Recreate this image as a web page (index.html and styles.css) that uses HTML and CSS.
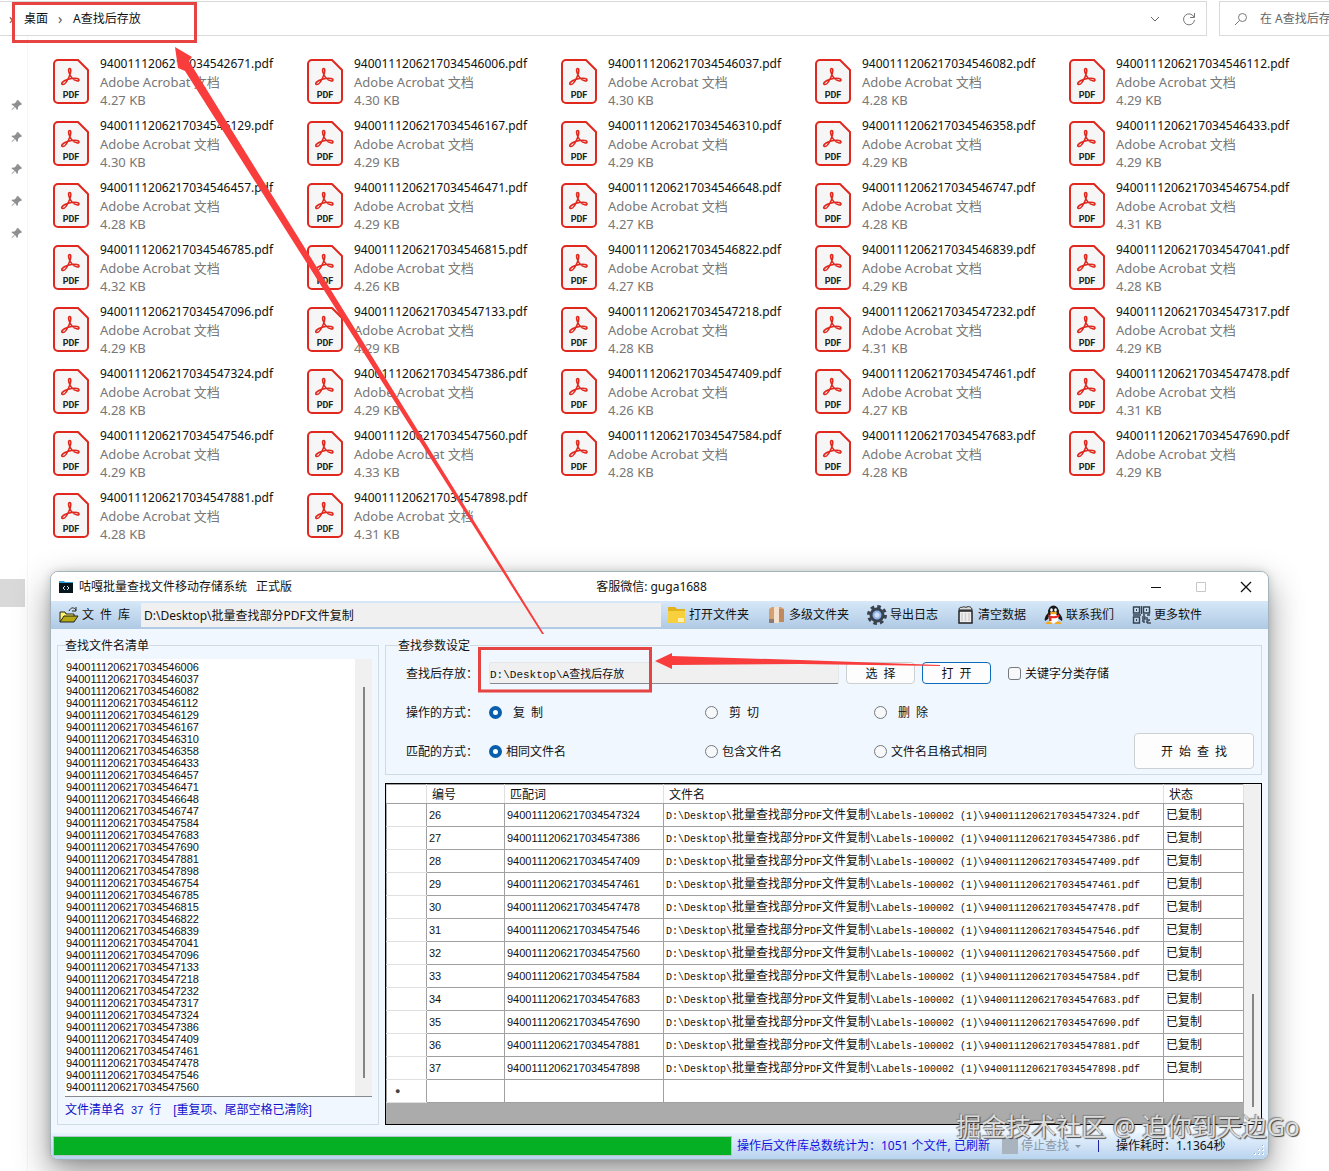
FILE: index.html
```html
<!DOCTYPE html>
<html lang="zh-CN">
<head>
<meta charset="utf-8">
<meta name="viewport" content="width=device-width, initial-scale=1">
<title>A查找后存放</title>
<link rel="stylesheet" href="styles.css">
</head>
<body>
<svg class="sprite" aria-hidden="true">
  <symbol id="pdf" viewBox="0 0 38 46">
    <path d="M6 2H26L36 12V41a4 4 0 0 1-4 4H6a4 4 0 0 1-4-4V6a4 4 0 0 1 4-4z" fill="#f6f6f6" stroke="#e0281e" stroke-width="2" stroke-linejoin="round"/>
    <path d="M17.500 10.500c2 0 1.500 4-.5 8.500-2 4.500-4.500 8-6.500 7.500-2-.5 0-3.500 5-5 5-1.500 11-2 11.500.5.3 1.800-4 1-7-2-3-3-4.500-9.500-2.500-9.500z" fill="none" stroke="#e0281e" stroke-width="1.600"/>
    <text x="19" y="40" text-anchor="middle" class="pdf-tag">PDF</text>
  </symbol>
  <symbol id="pin" viewBox="0 0 12 12">
    <path d="M7 1l4 4-1 1-1 0-2 2 0 2-1 1-2-3-3 3-.5-.5 3-3-3-2 1-1 2 0 2-2 0-1z" fill="#8d9093"/>
  </symbol>
</svg>

<header class="explorer-bar">
  <nav class="address" aria-label="路径">
    <span class="chevron">›</span><a href="#desktop">桌面</a><span class="chevron">›</span><a href="#folder">A查找后存放</a>
    <span class="address-tools">
      <button type="button" class="plain" aria-label="历史"><svg width="10" height="10" viewBox="0 0 10 10"><path d="M1 3l4 4 4-4" fill="none" stroke="#666"/></svg></button>
      <button type="button" class="plain" aria-label="刷新"><svg width="14" height="14" viewBox="0 0 14 14"><path d="M12 5A5.500 5.500 0 1 0 12.500 8M12.500 1v4.500H8" fill="none" stroke="#777"/></svg></button>
    </span>
  </nav>
  <label class="search">
    <svg width="14" height="14" viewBox="0 0 14 14"><circle cx="8.500" cy="5.500" r="4" fill="none" stroke="#777"/><path d="M5.500 8.500L1 13" stroke="#777"/></svg>
    <input type="text" value="在 A查找后存放 中搜索" aria-label="搜索">
  </label>
</header>

<div class="explorer">
  <aside class="sidebar">
    <svg class="pin"><use href="#pin"/></svg>
    <svg class="pin"><use href="#pin"/></svg>
    <svg class="pin"><use href="#pin"/></svg>
    <svg class="pin"><use href="#pin"/></svg>
    <svg class="pin"><use href="#pin"/></svg>
    <span class="selected-item"></span>
  </aside>

  <main class="content">
    <ul class="files" id="files"></ul>

    <section class="window">
      <header class="titlebar">
        <h1 class="title">
          <svg width="16" height="16" viewBox="0 0 16 16"><path d="M1 2h5l1 1h8v4H1z" fill="#2f9fd8"/><path d="M1 4h14v10H1z" fill="#07151f"/><path d="M7 7L5 9l2 2M9 7l2 2-2 2" fill="none" stroke="#cfe6f5"/></svg>
          <span>咕嘎批量查找文件移动存储系统&ensp; 正式版</span>
        </h1>
        <span class="contact">客服微信: guga1688</span>
        <span class="controls">
          <button type="button" class="plain" aria-label="最小化"><svg width="12" height="12" viewBox="0 0 12 12"><path d="M1 6.500h10" stroke="#111"/></svg></button>
          <button type="button" class="plain" aria-label="最大化"><svg width="12" height="12" viewBox="0 0 12 12"><path d="M1.500 1.500h9v9h-9z" fill="none" stroke="#c8c8c8"/></svg></button>
          <button type="button" class="plain" aria-label="关闭"><svg width="12" height="12" viewBox="0 0 12 12"><path d="M1 1l10 10M11 1L1 11" stroke="#111" stroke-width="1.300"/></svg></button>
        </span>
      </header>

      <div class="toolbar">
        <button type="button" class="tool library">
          <svg width="20" height="18" viewBox="0 0 20 18"><path d="M1 16V6h5l1 2h8v3" fill="#fff26b" stroke="#222"/><path d="M1 16l4-6h14l-4 6z" fill="#b5a914" stroke="#222"/><path d="M10 5c2-4 5-4 7-1M17 1v4h-4" fill="none" stroke="#222"/></svg>
          文&ensp;件&ensp;库</button>
        <input class="library-path" type="text" value="D:\Desktop\批量查找部分PDF文件复制" aria-label="文件库">
        <div class="tools">
          <button type="button" class="tool">
            <svg width="19" height="20" viewBox="0 0 19 20"><path d="M1 2h7l2 2h8v14H1z" fill="#e3b21c"/><path d="M1 6h17v12H1z" fill="#f8cf3c"/><path d="M11 13h6v4h-6z" fill="#fdf0b0"/></svg>
            打开文件夹</button>
          <button type="button" class="tool">
            <svg width="19" height="20" viewBox="0 0 19 20"><path d="M2 4l3-2h9l3 2v13H2z" fill="#d5a06f"/><path d="M7 2h5v16H7z" fill="#f3e2cf"/><path d="M2 14h5v4H2z" fill="#8f7b72"/><path d="M12 4h5v13h-5z" fill="#c08a5c"/></svg>
            多级文件夹</button>
          <button type="button" class="tool">
            <svg width="20" height="20" viewBox="0 0 20 20"><circle cx="10" cy="10" r="8.500" fill="none" stroke="#39434f" stroke-width="3" stroke-dasharray="3.600 3.076"/><circle cx="10" cy="10" r="6" fill="#8fb4e6" stroke="#39434f" stroke-width="3"/><circle cx="10" cy="10" r="2.500" fill="#cfe0f7"/></svg>
            导出日志</button>
          <button type="button" class="tool">
            <svg width="19" height="20" viewBox="0 0 19 20"><path d="M3 6h13v12H3z" fill="#eee" stroke="#222" stroke-width="1.500"/><path d="M3 5c0-4 3-2 4-3s2 1 4 0 5 0 5 3z" fill="#ddd" stroke="#222"/><path d="M6 8v8M9.500 8v8M13 8v8" stroke="#cfcfcf" stroke-width="1.500"/></svg>
            清空数据</button>
          <button type="button" class="tool">
            <svg width="19" height="20" viewBox="0 0 19 20"><path d="M4 8C1 11 0 14 1 16l3-2h11l3 2c1-2 0-5-3-8z" fill="#16181c"/><ellipse cx="9.500" cy="7" rx="5.500" ry="6.500" fill="#16181c"/><ellipse cx="9.500" cy="13.500" rx="5" ry="5" fill="#fff"/><ellipse cx="7.500" cy="5" rx="1.300" ry="1.800" fill="#fff"/><ellipse cx="11.500" cy="5" rx="1.300" ry="1.800" fill="#fff"/><ellipse cx="9.500" cy="8" rx="3.500" ry="1.200" fill="#f6a81c"/><path d="M4 9c3 3 8 3 11 0l.5 2.500c-3 2-6 2-8 1.500v3H5v-3z" fill="#e32b22"/><path d="M2 18.500c1-2 5-2 6 0zM11 18.500c1-2 5-2 6 0z" fill="#f6a81c" stroke="#f6a81c"/></svg>
            联系我们</button>
          <button type="button" class="tool">
            <svg width="19" height="20" viewBox="0 0 19 20" fill="none" stroke="#344150" stroke-width="1.400"><path d="M1.500 2h6v6h-6zM11.500 2h6v6h-6zM1.500 12h6v6h-6z"/><path d="M4 5h1M14 5h1M4 15h1" stroke-width="2"/><path d="M9.500 1v8M1 10h8M11 10h2m2 0h3M10 12h3v2h-3M15 12v3h3M10 16h2v2m2-1h2v2m2-2v2"/></svg>
            更多软件</button>
        </div>
      </div>

      <div class="workspace">
        <fieldset class="group">
          <legend>查找文件名清单</legend>
          <div class="name-list">
            <textarea id="names" rows="36" aria-label="查找文件名清单" readonly></textarea>
            <div class="scrollbar"><span class="thumb"></span></div>
          </div>
          <p class="summary">文件清单名&ensp;<span class="half">37</span>&ensp;行&emsp;[重复项、尾部空格已清除]</p>
        </fieldset>

        <div class="right">
          <fieldset class="group settings">
            <legend>查找参数设定</legend>
            <div class="line">
              <label class="caption" for="target">查找后存放：</label>
              <div class="target-field">
                <input id="target" type="text" value="D:\Desktop\A查找后存放">
              </div>
              <button type="button" class="push">选&ensp;择</button>
              <button type="button" class="push focused">打&ensp;开</button>
              <label class="check"><input type="checkbox">关键字分类存储</label>
            </div>
            <div class="line options">
              <span class="caption">操作的方式：</span>
              <label class="radio wide"><input type="radio" name="action" checked>复&ensp;制</label>
              <label class="radio wide"><input type="radio" name="action">剪&ensp;切</label>
              <label class="radio wide"><input type="radio" name="action">删&ensp;除</label>
            </div>
            <div class="line options">
              <span class="caption">匹配的方式：</span>
              <label class="radio"><input type="radio" name="match" checked>相同文件名</label>
              <label class="radio"><input type="radio" name="match">包含文件名</label>
              <label class="radio"><input type="radio" name="match">文件名且格式相同</label>
              <button type="button" class="push start">开&ensp;始&ensp;查&ensp;找</button>
            </div>
          </fieldset>

          <div class="results">
            <div class="results-body">
              <table>
                <colgroup><col class="c-mark"><col class="c-no"><col class="c-key"><col class="c-path"><col class="c-state"></colgroup>
                <thead><tr><th></th><th>编号</th><th>匹配词</th><th>文件名</th><th>状态</th></tr></thead>
                <tbody id="rows"></tbody>
              </table>
            </div>
            <div class="scrollbar low"><span class="thumb"></span></div>
          </div>
        </div>
      </div>

      <footer class="status">
        <div class="progress"></div>
        <span class="total">操作后文件库总数统计为：1051 个文件, 已刷新</span>
        <button type="button" class="plain stop" disabled><span class="stop-icon"></span>停止查找<span class="caret"></span></button>
        <span class="divider"></span>
        <span class="elapsed">操作耗时：1.1364秒</span>
        <svg class="grip" width="12" height="12" viewBox="0 0 12 12"><path d="M9 1h2v2H9zM5 5h2v2H5zM9 5h2v2H9zM1 9h2v2H1zM5 9h2v2H5zM9 9h2v2H9z" fill="#fff"/><path d="M9 1h1v1H9zM5 5h1v1H5zM9 5h1v1H9zM1 9h1v1H1zM5 9h1v1H5zM9 9h1v1H9z" fill="#8fa9c4"/></svg>
      </footer>
    </section>
  </main>
</div>

<svg class="annotations" width="1329" height="1171" viewBox="0 0 1329 1171" aria-hidden="true">
  <path d="M13.500 3.500h182v38h-182zM479.500 648.500h171v42.500h-171z" fill="none" stroke="#e64343" stroke-width="3"/>
  <path d="M175 47L192 57 189 61 544 634H542L185 71 178 68z" fill="#f93c3c"/>
  <path d="M655 661L672 653V656L800 660 940 665V666L800 664 672 665V669z" fill="#f93c3c"/>
</svg>
<div class="watermark">掘金技术社区 @ 追你到天边Go</div>
<script src="app.js"></script>
</body>
</html>
```
FILE: styles.css
```css
* { box-sizing: border-box; }

body {
  margin: 0;
  position: relative;
  min-height: 100vh;
  overflow: hidden;
  background: #fff;
  color: #111;
  font: 12px/18px "Noto Sans", "Noto Sans CJK SC", sans-serif;
}

input, button, textarea { font: inherit; color: inherit; }
a { color: inherit; text-decoration: none; }
p, h1, ul { margin: 0; padding: 0; }
.sprite { position: absolute; width: 0; height: 0; }
.plain { display: flex; align-items: center; padding: 0; border: 0; background: none; }

/* Explorer */
.explorer-bar { display: flex; gap: 12px; padding-top: 1px; }
.address {
  flex: 1;
  display: flex;
  align-items: center;
  gap: 10px;
  height: 35px;
  padding: 0 10px 0 9px;
  border: 1px solid #d9d9d9;
  border-left: 0;
}
.chevron { width: 5px; color: #555; font-size: 14px; }
.address-tools { display: flex; align-items: center; gap: 22px; margin-left: auto; }
.search {
  flex: 0 0 110px;
  display: flex;
  align-items: center;
  gap: 12px;
  height: 35px;
  padding-left: 14px;
  border: 1px solid #d9d9d9;
  border-right: 0;
}
.search svg { flex: none; }
.search input { width: 69px; padding: 0; border: 0; outline: 0; background: none; color: #666; }

.explorer { display: flex; }
.sidebar {
  flex: 0 0 28px;
  display: flex;
  flex-direction: column;
  gap: 20px;
  padding-top: 63px;
  border-right: 1px solid #f6f6f6;
}
.pin { width: 12px; height: 12px; margin-left: 11px; }
.selected-item { width: 25px; height: 28px; margin-top: 320px; background: #d9d9d9; }

.content { flex: 1; min-width: 0; padding: 19px 60px 12px 22px; }
.files {
  display: grid;
  grid-template-columns: repeat(auto-fill, 254px);
  grid-auto-rows: 62px;
  margin: 0 -60px 20px 2px;
  list-style: none;
}
.file { display: flex; gap: 10px; }
.file svg { flex: none; width: 38px; height: 46px; margin-top: 3px; }
.pdf-tag { font: bold 9px Roboto, sans-serif; fill: #222; }
.file-name, .file-meta { display: block; white-space: nowrap; }
.file-meta { color: #777; font-size: 13px; }

/* Application window */
.window {
  overflow: clip;
  border: 1px solid #a3b4bc;
  border-radius: 8px;
  background: #f0f7ff;
  box-shadow: 0 14px 34px rgba(0, 0, 0, .42), 0 0 8px rgba(0, 0, 0, .14);
}
.titlebar {
  display: grid;
  grid-template-columns: 1fr auto 1fr;
  align-items: center;
  height: 29px;
  padding: 0 23px 0 7px;
  background: #fff;
}
.title { display: flex; align-items: center; gap: 5px; font-size: 12px; font-weight: 400; white-space: nowrap; }
.controls { display: flex; justify-content: flex-end; gap: 33px; margin-right: -7px; }

.toolbar {
  display: flex;
  align-items: center;
  height: 28px;
  padding-left: 8px;
  background: linear-gradient(#d6e8f8, #afc9e4);
}
.tool {
  display: flex;
  align-items: center;
  gap: 3px;
  padding: 0;
  border: 0;
  background: none;
  white-space: nowrap;
}
.library { flex: 0 0 82px; }
.library-path {
  flex: 0 1 520px;
  min-width: 0;
  height: 24px;
  padding: 0 3px;
  border: 0;
  background: #f0f0f0;
}
.tools { display: flex; gap: 18px; padding-left: 6px; }

.workspace {
  display: grid;
  grid-template-columns: 322px minmax(0, 1fr);
  gap: 6px;
  padding: 8px 6px;
  font-family: "Liberation Mono", "Noto Sans CJK SC", monospace;
}
.group { min-width: 0; margin: 0; padding: 0 6px 4px 7px; border: 1px solid #cfdce6; }
.group legend { padding: 0; line-height: 16px; font-family: "Noto Sans CJK SC", sans-serif; }
.name-list {
  display: flex;
  margin-top: 6px;
  border-bottom: 1px solid #868a8e;
  background: #fff;
}
.name-list textarea {
  flex: 1;
  min-width: 0;
  height: 437px;
  padding: 2px 1px;
  border: 0;
  resize: none;
  overflow: hidden;
  background: none;
  font: 11px/12px "Liberation Sans", sans-serif;
}
.scrollbar { flex: 0 0 17px; display: flex; justify-content: center; padding: 28px 0 18px; background: #f0f0f0; }
.thumb { width: 2px; background: #858585; }
.summary { margin-top: 4px; line-height: 18px; color: #1010c8; font-family: "Liberation Sans", "Noto Sans CJK SC", sans-serif; }

.right { display: flex; flex-direction: column; gap: 8px; min-width: 0; }
.settings { padding: 0 7px 5px 20px; font-family: "Noto Sans CJK SC", sans-serif; }
.settings legend { margin-left: -8px; }
.line { display: flex; align-items: center; gap: 7px; height: 36px; margin-top: 2px; }
.line + .line { margin-top: 3px; }
.caption { flex: 0 0 76px; white-space: nowrap; }
.target-field { flex: 0 1 350px; min-width: 0; }
.target-field input {
  display: block;
  width: 100%;
  height: 22px;
  padding: 0;
  border: 1px solid #e4e7ea;
  border-bottom-color: #868a8e;
  border-radius: 2px;
  background: #f0f0f0;
  font-family: "Liberation Mono", "Noto Sans CJK SC", monospace;
  font-size: 11px;
}
.push {
  flex: 0 0 69px;
  height: 22px;
  padding: 0;
  border: 1px solid #cdd0d2;
  border-radius: 4px;
  background: #fdfdfd;
  line-height: 18px;
  white-space: nowrap;
}
.focused { border-color: #0c6cbd; }
.start { flex: 0 0 120px; height: 36px; margin-left: auto; }
.check { display: flex; align-items: center; gap: 4px; margin-left: 10px; white-space: nowrap; }
.check input, .radio input {
  appearance: none;
  width: 13px;
  height: 13px;
  margin: 0;
  border: 1px solid #75797d;
  border-radius: 3px;
  background: #f6f8fa;
}
.radio input { border-radius: 50%; }
.radio input:checked { border: 4px solid #0a5fad; background: #fff; }
.radio { display: flex; align-items: center; gap: 4px; flex: 0 1 209px; white-space: nowrap; }
.radio + .radio { flex-basis: 162px; }
.wide { gap: 11px; }

.results { display: flex; height: 342px; border: 1px solid #000; background: #ababab; }
.results-body { flex: 1; min-width: 0; overflow: hidden; }
table { width: 100%; border-collapse: collapse; table-layout: fixed; background: #fff; }
th, td { height: 23px; padding: 0 2px; border: 1px solid #a0a0a0; white-space: nowrap; overflow: hidden; line-height: 18px; }
thead th {
  height: 19px;
  padding: 0 5px;
  border-color: #a0a0a0 #e0e0e0;
  font: 12px/16px "Noto Sans CJK SC", sans-serif;
  text-align: left;
}
td:first-child { padding-left: 8px; border-color: #e0e0e0 #a0a0a0; color: #444; font-size: 9px; }
td { padding-top: 2px; }
.c-mark { width: 40px; }
.c-no { width: 78px; }
.c-key { width: 159px; }
.c-state { width: 80px; }
td.digits { padding-top: 0; font: 11px/18px "Liberation Sans", sans-serif; }
.half { font-size: 11px; }
.path .half { font-size: 10px; }
.low { padding: 210px 0 17px; }

.status {
  display: flex;
  align-items: center;
  height: 26px;
  padding: 0 3px 0 2px;
  background: linear-gradient(#e8f3ff, #b9d3ee);
  white-space: nowrap;
}
.progress { flex: 0 1 679px; height: 20px; border: 1px solid #b4c4c8; background: #06b025; }
.total { margin-left: 5px; color: #1212e0; }
.stop { gap: 3px; margin-left: 12px; color: #8b97a3; }
.stop-icon { width: 16px; height: 16px; background: #aab4bf; }
.caret { margin-left: 3px; border: 3px solid transparent; border-top-color: #8b97a3; border-bottom: 0; }
.divider { width: 1px; height: 12px; margin: 0 17px; background: #2020a0; }
.grip { margin: 8px 0 0 auto; }

/* Overlays */
.annotations { position: absolute; left: 0; top: 0; pointer-events: none; }
.watermark {
  position: absolute;
  right: 29px;
  bottom: 28px;
  color: #dcdcdc;
  font: 25px/36px "Noto Sans", "Noto Sans CJK SC", sans-serif;
  text-shadow: 1px 1px 1px #444, -1px -1px 1px #888;
  white-space: nowrap;
}
```
FILE: app.js
```js
// Last four digits and size in KB; every name starts with the same batch prefix.
const PREFIX = "940011120621703454";
const files = `2671 4.27,6006 4.30,6037 4.30,6082 4.28,6112 4.29,6129 4.30,6167 4.29,6310 4.29,6358 4.29,6433 4.29,
6457 4.28,6471 4.29,6648 4.27,6747 4.28,6754 4.31,6785 4.32,6815 4.26,6822 4.27,6839 4.29,7041 4.28,
7096 4.29,7133 4.29,7218 4.28,7232 4.31,7317 4.29,7324 4.28,7386 4.29,7409 4.26,7461 4.27,7478 4.31,
7546 4.29,7560 4.33,7584 4.28,7683 4.28,7690 4.29,7881 4.28,7898 4.31`.split(",").map(f => f.trim().split(" "));

document.getElementById("files").innerHTML = files.map(([id, size]) => `
  <li class="file"><svg><use href="#pdf"/></svg><div>
    <span class="file-name">${PREFIX}${id}.pdf</span>
    <span class="file-meta">Adobe Acrobat 文档</span>
    <span class="file-meta">${size} KB</span>
  </div></li>`).join("");

const names = `6006 6037 6082 6112 6129 6167 6310 6358 6433 6457 6471 6648 6747 7584 7683 7690 7881 7898
6754 6785 6815 6822 6839 7041 7096 7133 7218 7232 7317 7324 7386 7409 7461 7478 7546 7560`.split(/\s+/);
document.getElementById("names").value = names.map(n => PREFIX + n).join("\n");

const matched = [7324, 7386, 7409, 7461, 7478, 7546, 7560, 7584, 7683, 7690, 7881, 7898];
const half = text => `<span class="half">${text}</span>`;
document.getElementById("rows").innerHTML = matched.map((id, i) => `
  <tr><td></td><td class="digits">${26 + i}</td><td class="digits">${PREFIX}${id}</td>
  <td class="path">${half("D:\\Desktop\\")}批量查找部分${half("PDF")}文件复制${half(`\\Labels-100002 (1)\\${PREFIX}${id}.pdf`)}</td>
  <td>已复制</td></tr>`).join("") + "<tr><td>●</td><td></td><td></td><td></td><td></td></tr>";
```
